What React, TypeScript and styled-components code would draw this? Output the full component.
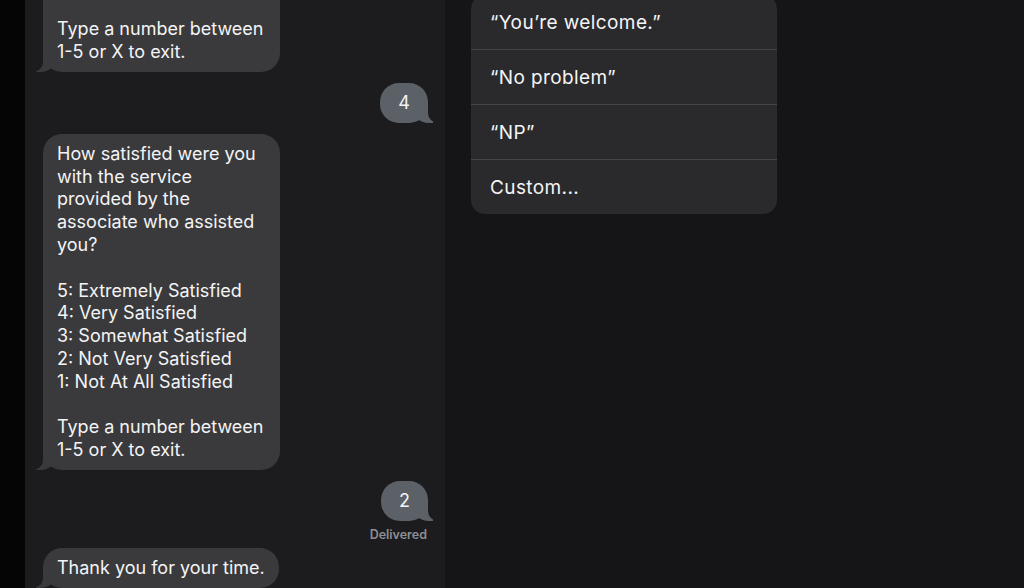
import styled, { createGlobalStyle } from 'styled-components';

const GlobalStyle = createGlobalStyle`
  html, body {
    margin: 0;
    padding: 0;
    background: #000;
  }
  body {
    font-family: Inter, "Noto Sans", "Liberation Sans", sans-serif;
    -webkit-font-smoothing: antialiased;
  }
`;

const Screen = styled.div`
  display: flex;
  width: 1024px;
  height: 588px;
  overflow: hidden;
`;

const Gutter = styled.div`
  width: 25px;
  flex-shrink: 0;
  background: #050505;
`;

const ChatPane = styled.div`
  width: 420px;
  flex-shrink: 0;
  box-sizing: border-box;
  background: #1c1c1e;
  display: flex;
  flex-direction: column;
  justify-content: flex-end;
  padding: 0 17px 0 18px;
  overflow: hidden;
`;

const Bubble = styled.div<{ $me?: boolean }>`
  position: relative;
  box-sizing: border-box;
  align-self: ${(p) => (p.$me ? 'flex-end' : 'flex-start')};
  max-width: 237px;
  min-width: ${(p) => (p.$me ? '47px' : 'auto')};
  margin-top: 11px;
  padding: 8.5px ${(p) => (p.$me ? '18px' : '14px')};
  border-radius: 19px;
  background: ${(p) => (p.$me ? '#5c6067' : '#3a3a3c')};
  color: #f4f4f6;
  font-size: 18px;
  line-height: 22.8px;
  text-align: ${(p) => (p.$me ? 'center' : 'left')};
  white-space: pre-line;
  flex-shrink: 0;

  &::before {
    content: '';
    position: absolute;
    bottom: 0;
    width: 20px;
    height: 20px;
    background: ${(p) => (p.$me ? '#5c6067' : '#3a3a3c')};
    ${(p) =>
      p.$me
        ? 'right: -5px; border-bottom-left-radius: 16px 14px;'
        : 'left: -7px; border-bottom-right-radius: 16px 14px;'}
  }

  &::after {
    content: '';
    position: absolute;
    bottom: 0;
    width: 26px;
    height: 20px;
    background: #1c1c1e;
    ${(p) =>
      p.$me
        ? 'right: -26px; border-bottom-left-radius: 10px;'
        : 'left: -26px; border-bottom-right-radius: 10px;'}
  }
`;

const Status = styled.div`
  align-self: flex-end;
  margin: 6px 1px 6px 0;
  font-size: 12.5px;
  line-height: 15px;
  font-weight: 600;
  color: #8e8e93;
`;

const SidePane = styled.div`
  flex: 1;
  background: #151517;
  padding-left: 26px;
`;

const Menu = styled.div`
  width: 306px;
  margin-top: -5px;
  background: #2a2a2c;
  border-radius: 14px;
  overflow: hidden;
`;

const MenuItem = styled.div`
  height: 54px;
  display: flex;
  align-items: center;
  padding-left: 19px;
  color: #f4f4f6;
  font-size: 19px;
  letter-spacing: 0.4px;
  & + & {
    border-top: 1px solid #454547;
  }
`;

const question = `How satisfied were you with the service provided by the associate who assisted you?

5: Extremely Satisfied
4: Very Satisfied
3: Somewhat Satisfied
2: Not Very Satisfied
1: Not At All Satisfied

Type a number between 1-5 or X to exit.`;

const replies = ['\u201CYou\u2019re welcome.\u201D', '\u201CNo problem\u201D', '\u201CNP\u201D', 'Custom...'];

export default function App() {
  return (
    <>
      <GlobalStyle />
      <Screen>
        <Gutter />
        <ChatPane>
          <Bubble>{question}</Bubble>
          <Bubble $me>4</Bubble>
          <Bubble>{question}</Bubble>
          <Bubble $me>2</Bubble>
          <Status>Delivered</Status>
          <Bubble style={{ marginTop: 0 }}>Thank you for your time.</Bubble>
        </ChatPane>
        <SidePane>
          <Menu>
            {replies.map((r) => (
              <MenuItem key={r}>{r}</MenuItem>
            ))}
          </Menu>
        </SidePane>
      </Screen>
    </>
  );
}
